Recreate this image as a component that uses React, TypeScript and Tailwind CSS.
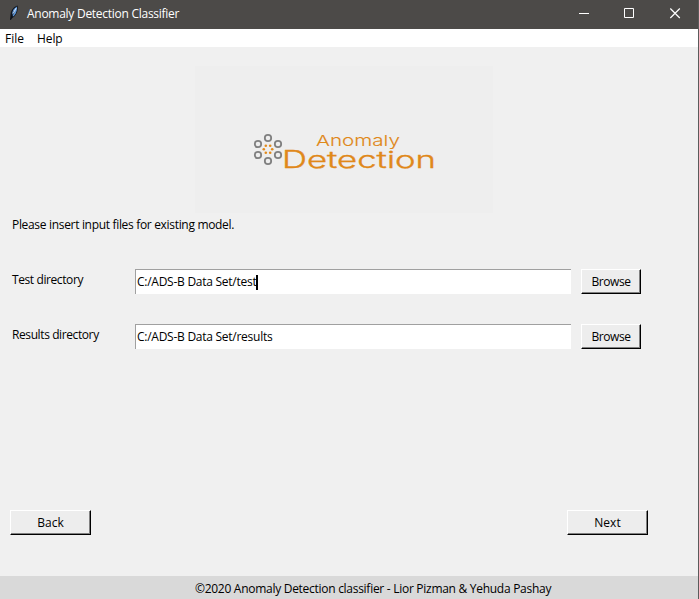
import type { ReactNode } from 'react';

function TitleBar() {
  return (
    <header className="flex h-[29px] shrink-0 items-center bg-[#4c4a48] text-white">
      <svg className="ml-[8px] mb-[3px] h-4 w-3" viewBox="0 0 12 16">
        <path d="M2 15 L2.6 9 C3 5 6 1.5 9.5 0.5 C10.5 4 9 10 5 12.5 Z" fill="#10151d" />
        <path d="M4 10 C4 6 6 3 9 1.5 C9.3 5 8 9.5 5 11.5 Z" fill="#5e98dc" />
        <path d="M2.5 15 L4.5 10 L6.5 6" stroke="#0c1018" strokeWidth="0.9" fill="none" />
        <path d="M5.2 8.5 L8.2 3" stroke="#d6e8fc" strokeWidth="1" />
      </svg>
      <h1 className="mb-px ml-[7px] text-[12px] leading-4 tracking-[-0.27px]">Anomaly Detection Classifier</h1>
      <svg className="ml-auto h-[29px] w-[130px]" viewBox="0 0 130 29" fill="none" stroke="#fff">
        <path d="M11 13.5 H21" />
        <path d="M56.5 8.5 H65.5 V17.5 H56.5 Z" />
        <path d="M102.3 8.5 L111.8 18 M111.8 8.5 L102.3 18" strokeWidth="1.2" />
      </svg>
    </header>
  );
}

function Logo() {
  const rings = [[268, 138], [258, 144], [278, 144], [258, 155], [278, 155], [268, 161]];
  const dots = [[265.8, 145.8], [270.2, 145.8], [263.8, 149.3], [272.2, 149.3], [265.8, 152.8], [270.2, 152.8]];
  return (
    <div className="ml-[195px] h-[147px] w-[298px] bg-[#eeeeee]">
      <svg className="h-full w-full" viewBox="195 66 298 147">
        {rings.map(([x, y]) => (
          <circle key={`${x}-${y}`} cx={x} cy={y} r="3.2" fill="none" stroke="#808080" strokeWidth="1.8" />
        ))}
        {dots.map(([x, y]) => (
          <circle key={`${x}-${y}`} cx={x} cy={y} r="1.3" fill="#e18a1c" />
        ))}
        <g fill="#e0881a" stroke="#e0881a" fontFamily="Inter, sans-serif">
          <text x="316" y="145.5" fontSize="15" fontWeight="300" strokeWidth="0.1" textLength="84" lengthAdjust="spacingAndGlyphs">Anomaly</text>
          <text x="282" y="168" fontSize="23.5" fontWeight="300" strokeWidth="0.35" textLength="154" lengthAdjust="spacingAndGlyphs">Detection</text>
        </g>
      </svg>
    </div>
  );
}

function TkButton({ className, children }: { className: string; children: ReactNode }) {
  return (
    <button className={`flex h-[25px] items-center justify-center border border-t-white border-l-white border-r-black border-b-black bg-[#ededed] pt-px shadow-[inset_-1px_-1px_0_#808080] ${className}`}>
      {children}
    </button>
  );
}

function DirectoryRow({ label, labelClass, value, valueClass, active }: {
  label: string;
  labelClass: string;
  value: string;
  valueClass: string;
  active?: boolean;
}) {
  return (
    <div className="flex h-[26px] items-start">
      <label className={`ml-[12px] w-[123px] pt-[3px] ${labelClass}`}>{label}</label>
      <div className="flex h-[25px] w-[436px] items-center border-t border-l border-[#a0a0a0] bg-white pl-px">
        <span className={valueClass}>{value}</span>
        {active && <span className="h-[15px] w-[2px] bg-black" />}
      </div>
      <TkButton className="ml-[10px] w-[60px] tracking-[-0.45px]">Browse</TkButton>
    </div>
  );
}

export default function App() {
  return (
    <div className="flex h-[599px] w-[699px] flex-col overflow-hidden border-r border-[#5b5b5b] bg-[#f0f0f0] font-['Open_Sans','Noto_Sans',sans-serif] text-[12px] leading-4 text-black">
      <TitleBar />
      <nav className="flex h-[18px] shrink-0 items-center gap-[13px] bg-white pl-[5px] pt-px">
        <span className="w-[19px]">File</span>
        <span className="tracking-[-0.1px]">Help</span>
      </nav>
      <main className="flex grow flex-col pt-[19px]">
        <Logo />
        <p className="ml-[12px] mt-[4px] tracking-[-0.32px]">Please insert input files for existing model.</p>
        <div className="mt-[36px] flex flex-col gap-[29px]">
          <DirectoryRow label="Test directory" labelClass="tracking-[-0.4px]" value="C:/ADS-B Data Set/test" valueClass="tracking-[-0.26px]" active />
          <DirectoryRow label="Results directory" labelClass="tracking-[-0.4px]" value="C:/ADS-B Data Set/results" valueClass="tracking-[-0.26px]" />
        </div>
        <div className="mt-[160px] flex justify-between pl-[10px] pr-[50px]">
          <TkButton className="w-[81px]">Back</TkButton>
          <TkButton className="w-[81px]">Next</TkButton>
        </div>
      </main>
      <footer className="flex h-[23px] shrink-0 items-center bg-[#d9d9d9] pl-[195px] pt-[2px] tracking-[-0.28px]">
        ©2020 Anomaly Detection classifier - Lior Pizman &amp; Yehuda Pashay
      </footer>
    </div>
  );
}
